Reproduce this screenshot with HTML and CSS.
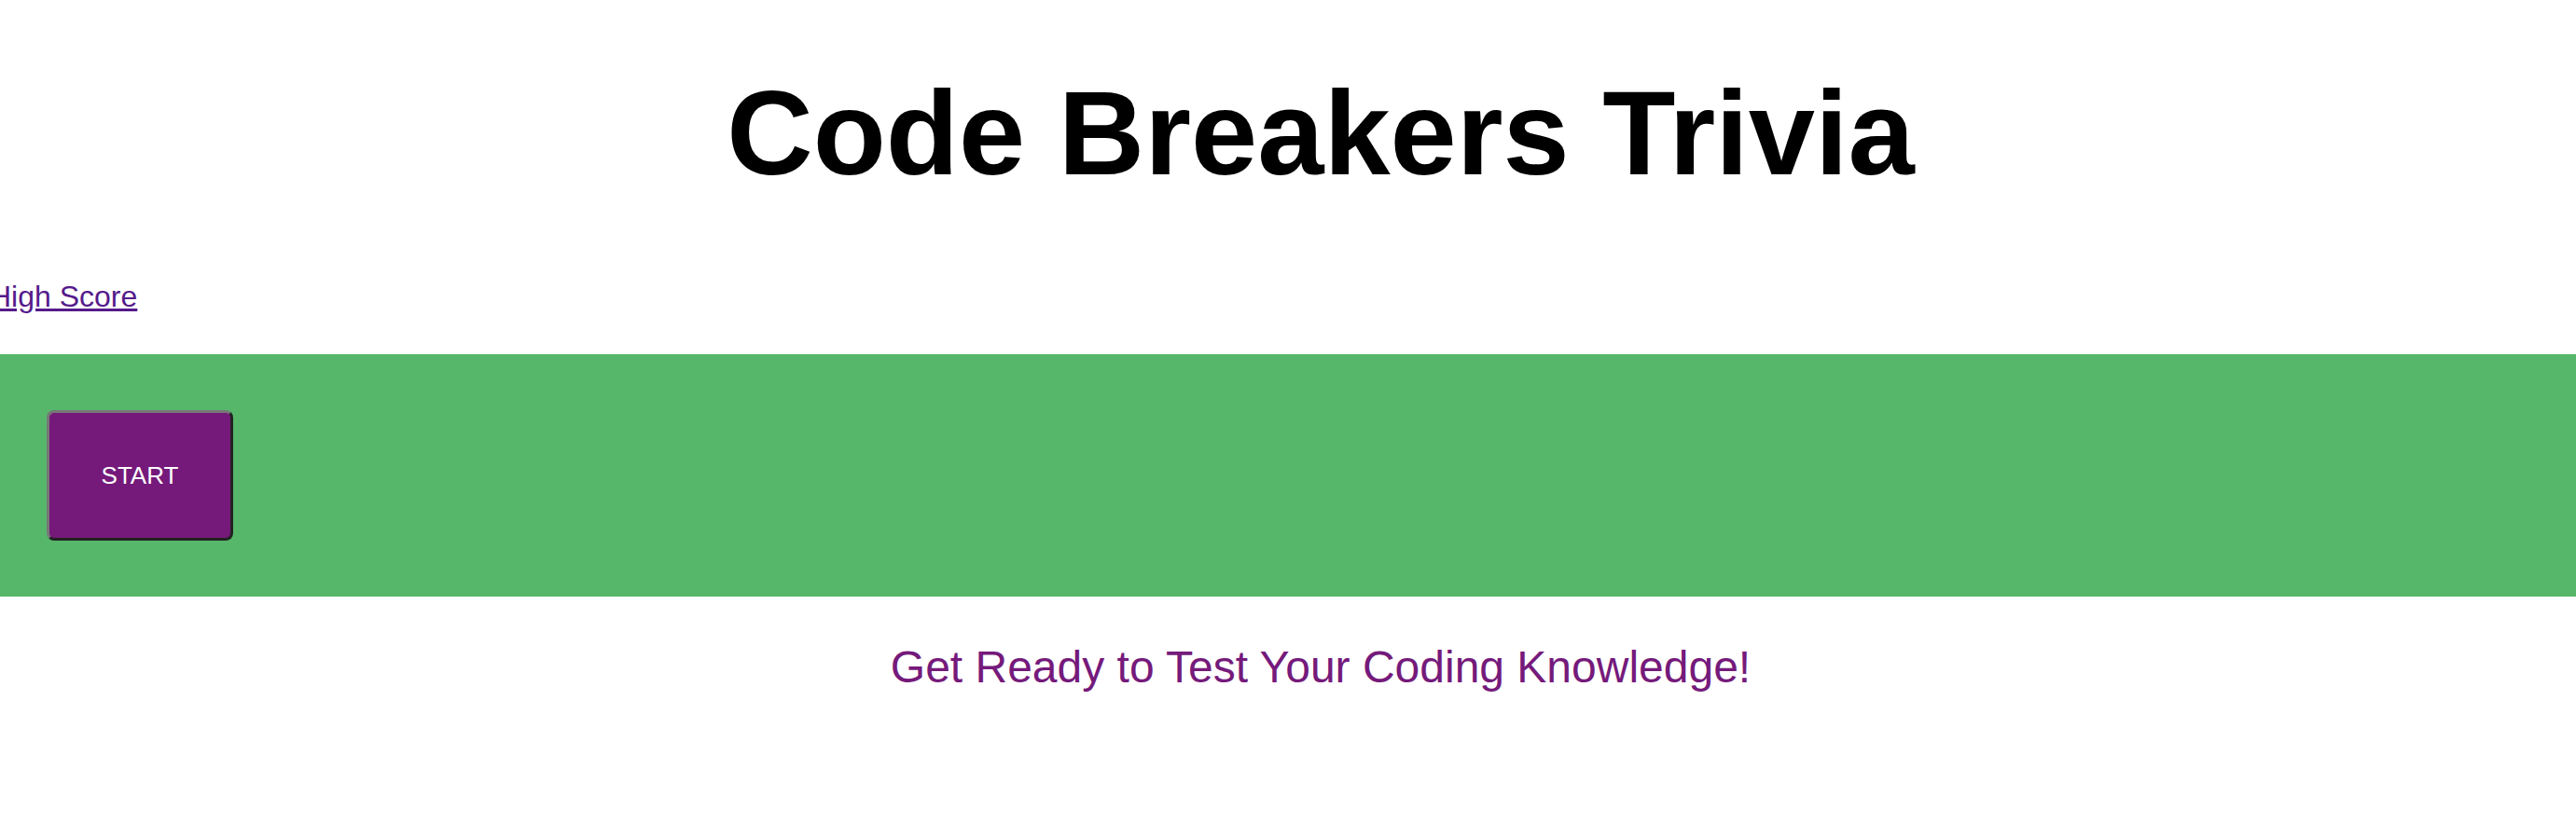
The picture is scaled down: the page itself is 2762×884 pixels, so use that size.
FILE: index.html
```html
<!DOCTYPE html>
<html lang="en">
<head>
<meta charset="utf-8">
<title>Code Breakers Trivia</title>
<link rel="stylesheet" href="styles.css">
</head>
<body>
  <header class="header">
    <h1 class="title">Code Breakers Trivia</h1>
  </header>
  <nav class="nav">
    <a class="score-link" href="#">High Score</a>
  </nav>
  <main class="band">
    <button class="start-btn" type="button">START</button>
  </main>
  <section class="intro">
    <h2 class="tagline">Get Ready to Test Your Coding Knowledge!</h2>
  </section>
</body>
</html>
```

FILE: styles.css
```css
html, body {
  margin: 0;
  padding: 0;
  background: #ffffff;
}

body {
  font-family: "Liberation Sans", Arial, sans-serif;
  display: flex;
  flex-direction: column;
}

.header {
  padding-top: 69px;
  padding-left: 70px;
}

.title {
  margin: 0;
  font-size: 128px;
  font-weight: bold;
  text-align: center;
  color: #000000;
  line-height: 147px;
}

.nav {
  margin-top: 84px;
  height: 37px;
}

.score-link {
  display: inline-block;
  margin-left: -11px;
  font-size: 32px;
  line-height: 37px;
  color: #551a8b;
  text-decoration: underline;
}

.band {
  margin-top: 43px;
  background: #56b76b;
  padding: 60px 50px;
  display: flex;
  align-items: center;
}

.start-btn {
  width: 200px;
  height: 140px;
  background: #751a7b;
  color: #ffffff;
  font-family: "Liberation Sans", Arial, sans-serif;
  font-size: 26px;
  border-width: 3px;
  border-style: solid;
  border-color: #777777 #222222 #222222 #777777;
  border-radius: 8px;
  padding: 0;
  cursor: pointer;
}

.intro {
  margin-top: 48px;
  padding-left: 70px;
}

.tagline {
  margin: 0;
  font-size: 48px;
  font-weight: normal;
  line-height: 55px;
  color: #751a7b;
  text-align: center;
}
```
